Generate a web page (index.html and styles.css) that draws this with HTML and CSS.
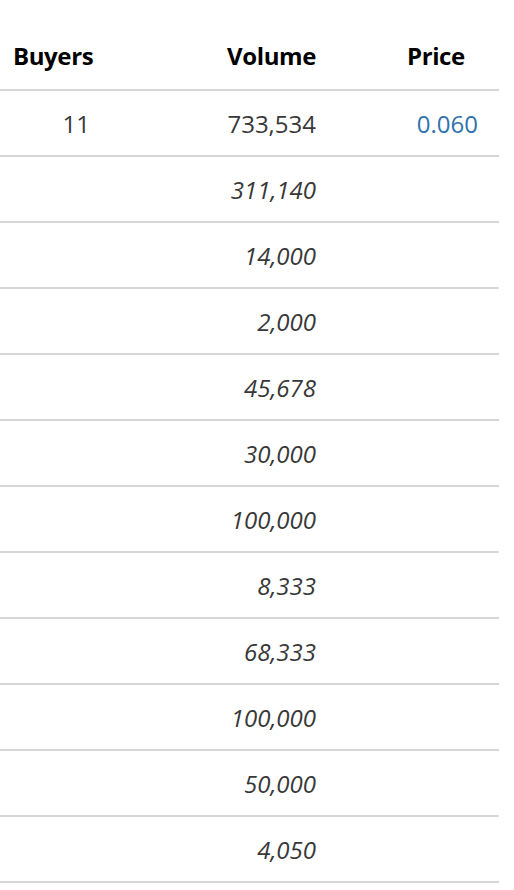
FILE: index.html
```html
<!DOCTYPE html>
<html lang="en">
<head>
<meta charset="utf-8">
<title>Buyers</title>
<link rel="stylesheet" href="styles.css">
</head>
<body>
<table class="orders">
  <colgroup>
    <col class="c-buyers">
    <col class="c-volume">
    <col class="c-price">
  </colgroup>
  <thead>
    <tr>
      <th class="h-buyers">Buyers</th>
      <th class="h-volume">Volume</th>
      <th class="h-price">Price</th>
    </tr>
  </thead>
  <tbody>
    <tr class="lead">
      <td class="d-buyers">11</td>
      <td class="d-volume">733,534</td>
      <td class="d-price">0.060</td>
    </tr>
    <tr class="sub"><td class="d-buyers"></td><td class="d-volume">311,140</td><td class="d-price"></td></tr>
    <tr class="sub"><td class="d-buyers"></td><td class="d-volume">14,000</td><td class="d-price"></td></tr>
    <tr class="sub"><td class="d-buyers"></td><td class="d-volume">2,000</td><td class="d-price"></td></tr>
    <tr class="sub"><td class="d-buyers"></td><td class="d-volume">45,678</td><td class="d-price"></td></tr>
    <tr class="sub"><td class="d-buyers"></td><td class="d-volume">30,000</td><td class="d-price"></td></tr>
    <tr class="sub"><td class="d-buyers"></td><td class="d-volume">100,000</td><td class="d-price"></td></tr>
    <tr class="sub"><td class="d-buyers"></td><td class="d-volume">8,333</td><td class="d-price"></td></tr>
    <tr class="sub"><td class="d-buyers"></td><td class="d-volume">68,333</td><td class="d-price"></td></tr>
    <tr class="sub"><td class="d-buyers"></td><td class="d-volume">100,000</td><td class="d-price"></td></tr>
    <tr class="sub"><td class="d-buyers"></td><td class="d-volume">50,000</td><td class="d-price"></td></tr>
    <tr class="sub"><td class="d-buyers"></td><td class="d-volume">4,050</td><td class="d-price"></td></tr>
  </tbody>
</table>
</body>
</html>
```

FILE: styles.css
```css
html, body {
  margin: 0;
  padding: 0;
  background: #ffffff;
}

body {
  font-family: "Open Sans", "Liberation Sans", sans-serif;
  font-size: 24px;
  color: #383838;
}

.orders {
  width: 499px;
  border-collapse: collapse;
  table-layout: fixed;
}

.c-buyers { width: 140px; }
.c-volume { width: 190px; }
.c-price { width: 169px; }

.orders th,
.orders td {
  line-height: 33px;
  border-bottom: 2px solid #d6d6d6;
  white-space: nowrap;
  overflow: hidden;
}

.orders th {
  font-weight: 700;
  color: #000000;
  padding: 39px 0 17px 0;
  letter-spacing: -0.4px;
}

.orders td {
  padding: 16px 0 15px 0;
  height: 33px;
}

.h-buyers { text-align: left; padding-left: 13px !important; }
.h-volume { text-align: right; padding-right: 14px !important; }
.h-price { text-align: left; padding-left: 77px !important; }

.d-buyers { text-align: right; padding-right: 50px !important; }
.d-volume { text-align: right; padding-right: 14px !important; }
.d-price { text-align: right; padding-right: 21px !important; color: #2f72ad; }

.sub .d-volume { font-style: italic; }
```
